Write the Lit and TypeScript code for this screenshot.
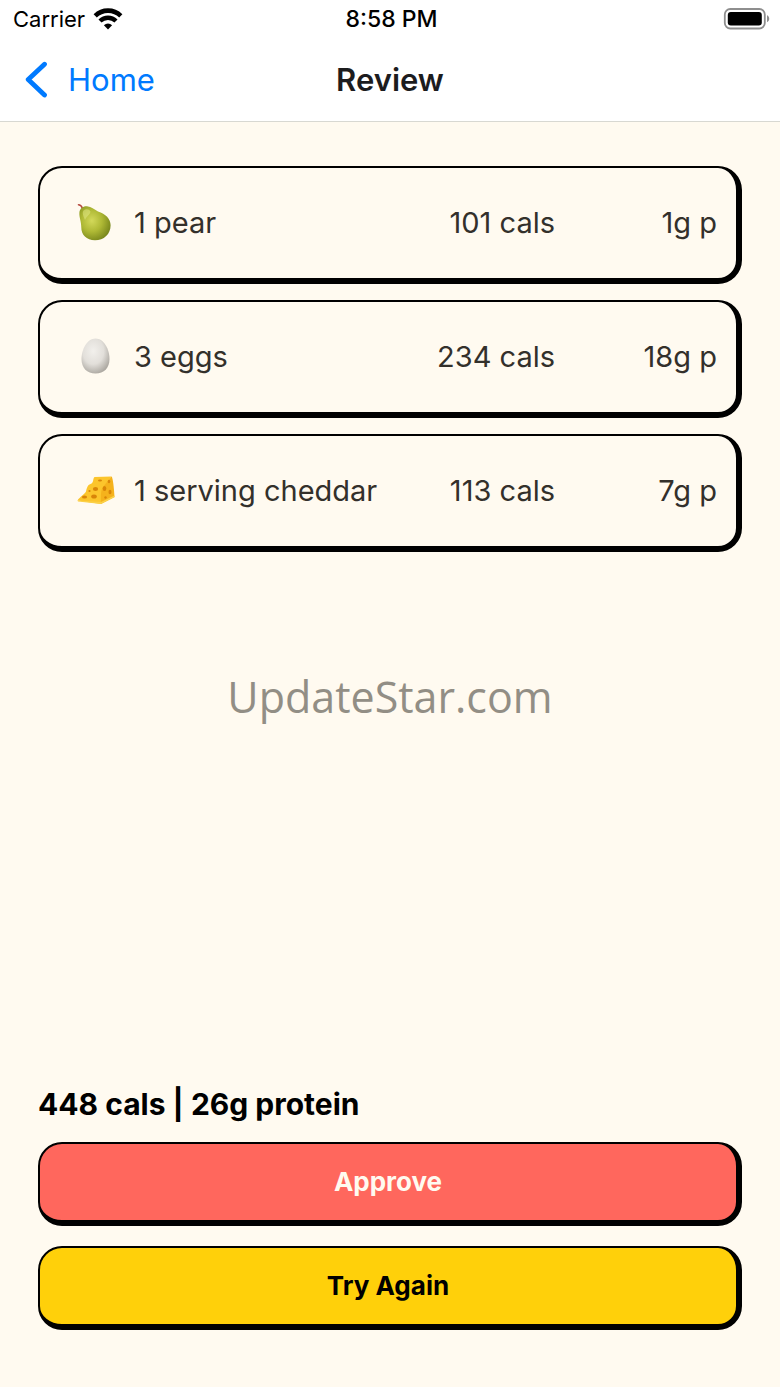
import { LitElement, html, css, svg } from "lit";
import { customElement, property } from "lit/decorators.js";

interface FoodItem {
  icon: "pear" | "egg" | "cheese";
  name: string;
  cals: number;
  protein: number;
}

const ITEMS: FoodItem[] = [
  { icon: "pear", name: "1 pear", cals: 101, protein: 1 },
  { icon: "egg", name: "3 eggs", cals: 234, protein: 18 },
  { icon: "cheese", name: "1 serving cheddar", cals: 113, protein: 7 },
];

const ICONS = {
  pear: svg`
    <defs>
      <radialGradient id="pear" cx="0.4" cy="0.42" r="0.65">
        <stop offset="0" stop-color="#d3d95a" />
        <stop offset="0.5" stop-color="#afb935" />
        <stop offset="1" stop-color="#76841a" />
      </radialGradient>
    </defs>
    <path d="M2.500 1.800C4.500 1.800 5.500 3 6.500 5.500" fill="none" stroke="#b5483e" stroke-width="1.600" stroke-linecap="round" />
    <path d="M3.400 9.500C3.800 5.500 7 3 11 3.300C15.500 3.700 18 6.400 22 8.400C29.500 11 34.600 15.500 34.600 22.200C34.600 31 28 37.300 19 37.300C10.500 37.300 5.200 31.500 5.300 24.500C5.300 18.500 3 14 3.400 9.500Z" fill="url(#pear)" />
    <path d="M7.500 7.500C10 5.500 13 6 14.500 8.500C14 12 10.500 13 9 17C7.500 13 5.800 10 7.500 7.500Z" fill="#e6ec8e" opacity="0.5" />`,
  egg: svg`
    <defs>
      <radialGradient id="egg" cx="0.42" cy="0.36" r="0.68">
        <stop offset="0" stop-color="#f2f0ec" />
        <stop offset="0.55" stop-color="#e2dfda" />
        <stop offset="1" stop-color="#aaa69f" />
      </radialGradient>
    </defs>
    <path d="M19.500 1.500C28 1.500 33.500 12.500 33.500 22C33.500 31 28 36.500 19.500 36.500C11 36.500 5.500 31 5.500 22C5.500 12.500 11 1.500 19.500 1.500Z" fill="url(#egg)" />`,
  cheese: svg`
    <path d="M1.500 29.500C4 25.500 8 24 10 20.500C11 16.500 11.500 14 14.500 13C18 12 16.500 8 18.500 6L35.500 5.500L27 17.500L25 33Z" fill="#fcc52c" />
    <path d="M35.500 5.500C37 6 38.500 21.500 38.500 26L25 33C25 26.500 24.500 20.500 26.500 16.500Z" fill="#f5b21c" />
    <path d="M1.500 29.500L25 31L38.500 24.500L38.500 26.300L25 33L2 30.500Z" fill="#fbd047" />
    <g fill="#d98508">
      <ellipse cx="19.500" cy="18" rx="2.600" ry="2" />
      <ellipse cx="8.500" cy="26" rx="2.600" ry="1.600" />
      <ellipse cx="18" cy="25.500" rx="2.800" ry="2" />
      <ellipse cx="28.500" cy="17.500" rx="1.800" ry="2.600" />
      <ellipse cx="34" cy="21" rx="1.500" ry="2.200" />
      <ellipse cx="33" cy="10.500" rx="1.300" ry="1.800" />
      <ellipse cx="24" cy="9.500" rx="2" ry="1" />
      <circle cx="13.500" cy="20" r="1.100" />
      <circle cx="29.500" cy="26.500" r="1.200" />
    </g>`,
};

@customElement("status-bar")
class StatusBar extends LitElement {
  static styles = css`
    :host {
      display: grid;
      grid-template-columns: 1fr auto 1fr;
      align-items: center;
      height: 38px;
      padding: 0 10px 0 13px;
      font-size: 22px;
      line-height: 28px;
      color: #000;
    }
    .carrier {
      display: flex;
      align-items: center;
      gap: 8px;
    }
    .time {
      font-size: 23px;
      font-weight: 500;
    }
    .battery {
      justify-self: end;
    }
    svg {
      display: block;
    }
  `;

  render() {
    return html`
      <div class="carrier">
        <span>Carrier</span>
        <svg width="30" height="22" viewBox="0 0 30 22" aria-hidden="true">
          <path d="M2.200 7.800A18.500 18.500 0 0 1 27.800 7.800" fill="none" stroke="#000" stroke-width="4.600" />
          <path d="M7 13A11.500 11.500 0 0 1 23 13" fill="none" stroke="#000" stroke-width="4.400" />
          <path d="M15 21.400L10.900 17.200A6 6 0 0 1 19.100 17.200Z" />
        </svg>
      </div>
      <span class="time">8:58 PM</span>
      <svg class="battery" width="47" height="22" viewBox="0 0 47 22" role="img" aria-label="Battery full">
        <rect x="1.800" y="1" width="40" height="19.500" rx="5.500" fill="none" stroke="#8e8e8e" stroke-width="1.800" />
        <rect x="4.800" y="4" width="34" height="13.500" rx="3" />
        <path d="M44 7.300C47 8.500 47 13 44 14.200Z" fill="#8e8e8e" />
      </svg>
    `;
  }
}

@customElement("food-card")
class FoodCard extends LitElement {
  @property({ attribute: false }) item!: FoodItem;

  static styles = css`
    :host {
      display: flex;
      align-items: center;
      box-sizing: border-box;
      min-height: 118px;
      padding: 0 19px 0 36px;
      border: 2px solid #000;
      border-right-width: 6px;
      border-bottom-width: 6px;
      border-radius: 24px;
      font-size: 29px;
      line-height: 36px;
      color: #33302b;
    }
    .icon {
      flex: none;
      width: 40px;
      height: 40px;
      margin-right: 18px;
    }
    .name {
      flex: 1;
    }
    .protein {
      width: 162px;
      text-align: right;
    }
  `;

  render() {
    const { icon, name, cals, protein } = this.item;
    return html`
      <svg class="icon" viewBox="0 0 40 40" aria-hidden="true">${ICONS[icon]}</svg>
      <span class="name">${name}</span>
      <span class="cals">${cals} cals</span>
      <span class="protein">${protein}g p</span>
    `;
  }
}

@customElement("app-root")
class AppRoot extends LitElement {
  static styles = css`
    :host {
      display: flex;
      flex-direction: column;
      position: relative;
      min-height: 100vh;
      background: #fffaf0;
      font-family: Inter, "Liberation Sans", sans-serif;
    }
    .top {
      background: #fff;
      border-bottom: 1px solid #d8d8d2;
    }
    .nav {
      display: grid;
      grid-template-columns: 1fr auto 1fr;
      align-items: center;
      height: 83px;
      padding: 0 24px;
    }
    .back {
      display: flex;
      align-items: center;
      gap: 20px;
      justify-self: start;
      font-size: 31px;
      line-height: 40px;
      color: #007aff;
      text-decoration: none;
    }
    .title {
      margin: 0;
      font-size: 31px;
      line-height: 40px;
      font-weight: 600;
      color: #1c1c1e;
    }
    .content {
      flex: 1;
      display: flex;
      flex-direction: column;
      padding: 44px 38px 57px;
    }
    .list {
      display: flex;
      flex-direction: column;
      gap: 16px;
      margin: 0;
      padding: 0;
      list-style: none;
    }
    .total {
      margin: auto 0 20px;
      font-size: 30px;
      line-height: 36px;
      font-weight: 700;
      color: #000;
    }
    .actions {
      display: flex;
      flex-direction: column;
      gap: 20px;
    }
    .button {
      height: 84px;
      border: 2px solid #000;
      border-right-width: 6px;
      border-bottom-width: 6px;
      border-radius: 24px;
      font-family: inherit;
      font-size: 26px;
      line-height: 32px;
      font-weight: 700;
    }
    .approve {
      background: #ff675d;
      color: #fffaf0;
    }
    .retry {
      background: #ffd00a;
      color: #000;
    }
    .watermark {
      position: absolute;
      inset: 0;
      display: flex;
      align-items: center;
      justify-content: center;
      padding-top: 6px;
      font-family: "Open Sans", "Noto Sans", sans-serif;
      font-size: 43px;
      line-height: 60px;
      color: #928e85;
      pointer-events: none;
    }
  `;

  render() {
    const cals = ITEMS.reduce((sum, item) => sum + item.cals, 0);
    const protein = ITEMS.reduce((sum, item) => sum + item.protein, 0);
    return html`
      <header class="top">
        <status-bar></status-bar>
        <nav class="nav">
          <a class="back" href="#home">
            <svg width="24" height="38" viewBox="0 0 24 38" aria-hidden="true">
              <path d="M20.500 3.200L4.200 18.500L20.500 34" fill="none" stroke="#007aff" stroke-width="4.800" stroke-linecap="round" stroke-linejoin="round" />
            </svg>
            <span>Home</span>
          </a>
          <h1 class="title">Review</h1>
        </nav>
      </header>
      <main class="content">
        <ul class="list">
          ${ITEMS.map((item) => html`<li><food-card .item=${item}></food-card></li>`)}
        </ul>
        <p class="total">${cals} cals | ${protein}g protein</p>
        <div class="actions">
          <button class="button approve" type="button">Approve</button>
          <button class="button retry" type="button">Try Again</button>
        </div>
      </main>
      <div class="watermark">UpdateStar.com</div>
    `;
  }
}
